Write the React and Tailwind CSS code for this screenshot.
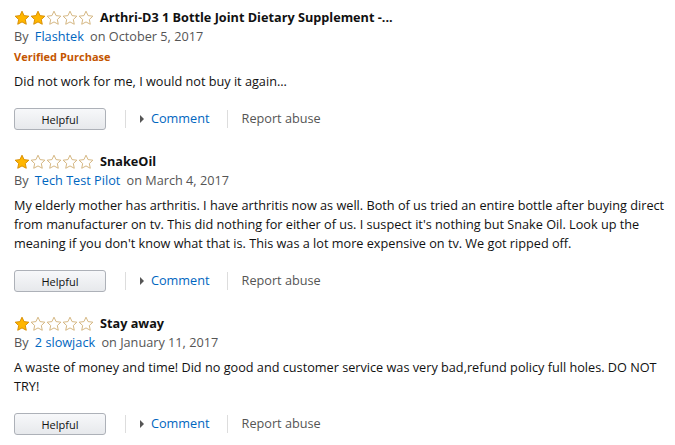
import React from "react";

const reviews = [
  {
    stars: 2,
    title: "Arthri-D3 1 Bottle Joint Dietary Supplement -...",
    author: "Flashtek",
    date: "October 5, 2017",
    verified: true,
    body: "Did not work for me, I would not buy it again...",
  },
  {
    stars: 1,
    title: "SnakeOil",
    author: "Tech Test Pilot",
    date: "March 4, 2017",
    body: "My elderly mother has arthritis. I have arthritis now as well. Both of us tried an entire bottle after buying direct from manufacturer on tv. This did nothing for either of us. I suspect it's nothing but Snake Oil. Look up the meaning if you don't know what that is. This was a lot more expensive on tv. We got ripped off.",
  },
  {
    stars: 1,
    title: "Stay away",
    author: "2 slowjack",
    date: "January 11, 2017",
    body: "A waste of money and time! Did no good and customer service was very bad,refund policy full holes. DO NOT TRY!",
  },
];

function Star({ filled }) {
  return (
    <svg width="16" height="16" viewBox="0 0 24 24">
      <path
        d="M12 1.8l3.1 6.6 7.2.9-5.3 5 1.4 7.1L12 17.9l-6.4 3.5 1.4-7.1-5.3-5 7.2-.9z"
        fill={filled ? "#ffb600" : "#fff"}
        stroke={filled ? "#d68c00" : "#d2b27a"}
        strokeWidth="1.4"
        strokeLinejoin="round"
      />
    </svg>
  );
}

function Review({ r }) {
  return (
    <div className="flex flex-col">
      <div className="flex items-center h-[19px]">
        <div className="flex">
          {[0, 1, 2, 3, 4].map((i) => (
            <Star key={i} filled={i < r.stars} />
          ))}
        </div>
        <span className="ml-[6px] font-bold text-[#111]">{r.title}</span>
      </div>
      <div className="h-[19px] leading-[19px] text-[#555]">
        By <a className="text-[#0066c0] mx-[3px]">{r.author}</a> on {r.date}
      </div>
      {r.verified && (
        <div className="mt-[1px] h-[19px] leading-[19px] text-[11px] font-bold text-[#c45500]">
          Verified Purchase
        </div>
      )}
      <p className="mt-[6px] leading-[19px] text-[#111]">{r.body}</p>
      <div className="mt-[17px] flex items-center h-[22px]">
        <button className="w-[92px] h-[22px] rounded-[3px] border border-[#adb1b8] bg-gradient-to-b from-[#f7f8fa] to-[#e7e9ec] text-[11px] text-[#111] leading-none">
          Helpful
        </button>
        <span className="ml-[19px] w-px h-[18px] bg-[#ddd]" />
        <span className="ml-[14px] w-0 h-0 border-y-[4px] border-y-transparent border-l-[4px] border-l-[#555]" />
        <a className="ml-[7px] text-[#0066c0]">Comment</a>
        <span className="ml-[17px] w-px h-[18px] bg-[#ddd]" />
        <span className="ml-[14px] text-[#555]">Report abuse</span>
      </div>
    </div>
  );
}

export default function App() {
  return (
    <div
      className="bg-white w-[675px] h-[445px] pl-[14px] pr-[4px] pt-[8px] flex flex-col gap-[22px] text-[12.7px]"
      style={{ fontFamily: '"Open Sans", "Noto Sans", sans-serif' }}
    >
      {reviews.map((r, i) => (
        <Review key={i} r={r} />
      ))}
    </div>
  );
}
